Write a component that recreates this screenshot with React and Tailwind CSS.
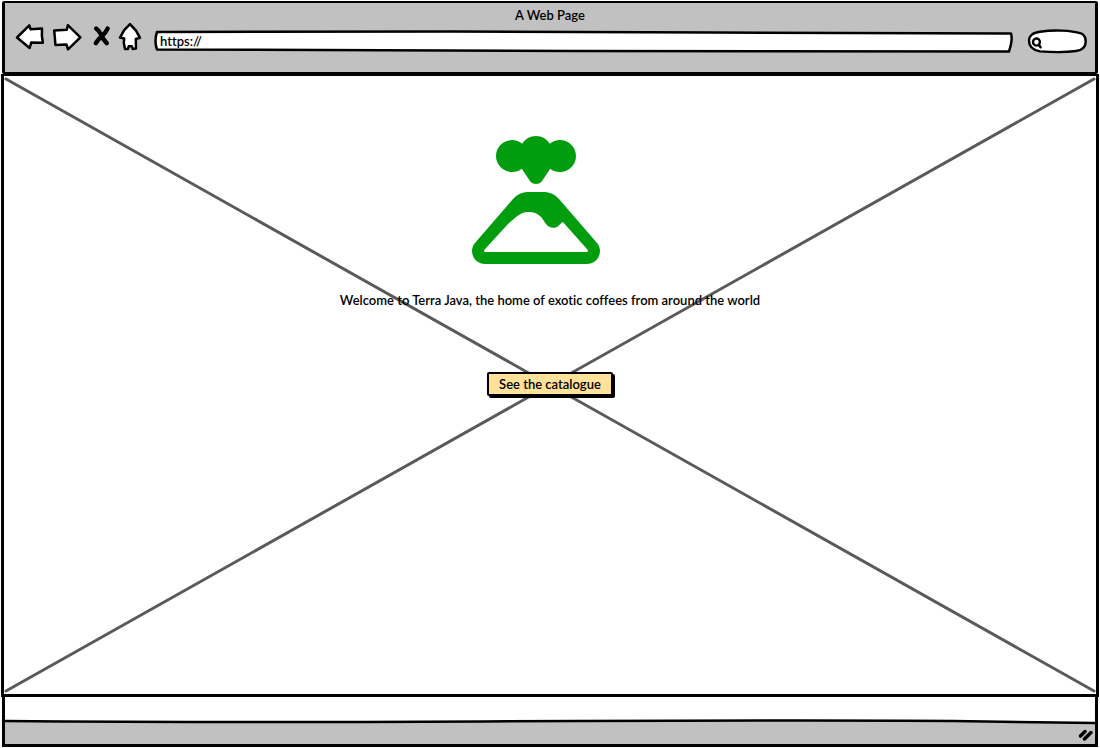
import React from "react";

function ToolButton({ label, viewBox, className, children }) {
  return (
    <button type="button" aria-label={label} className="shrink-0 cursor-pointer">
      <svg
        viewBox={viewBox}
        className={`block h-8 overflow-visible ${className}`}
        fill="white"
        stroke="black"
        strokeWidth="2.5"
        strokeLinejoin="round"
        strokeLinecap="round"
        aria-hidden="true"
      >
        {children}
      </svg>
    </button>
  );
}

function BrowserBar() {
  return (
    <header className="mx-px h-[73px] rounded-xs border-x-[3px] border-y-2 border-black bg-[#c1c1c1]">
      <h1 className="pt-0.5 text-center text-[13px] leading-5">A Web Page</h1>
      <div className="flex items-center gap-3 pr-2 pl-2.5">
        <nav aria-label="Browser controls" className="flex gap-2">
          <ToolButton label="Back" viewBox="15 25 29 32" className="w-[29px]">
            <path d="M17 37.5L29.3 25.4L30.5 29.2L42 28.6L41.9 36L42.9 42.8L31.3 42.4L29.6 48Z" />
          </ToolButton>
          <ToolButton label="Forward" viewBox="52 25 30 32" className="w-[30px]">
            <path d="M54.2 30.4L66.8 29.8L67.8 25.2L80.4 37.4L68 49.4L66.5 44.6L55.4 44.9L54.8 37Z" />
          </ToolButton>
          <ToolButton label="Stop" viewBox="90 25 20 32" className="w-5">
            <path d="M96.2 28.6Q99.4 31 101.4 35.4Q103.6 39.8 106.8 43.2M107.6 28.6Q105.6 33 101.8 36.2Q98 39.4 95.8 43.2" fill="none" strokeWidth="4.4" />
          </ToolButton>
          <ToolButton label="Home" viewBox="118 25 24 32" className="w-6">
            <path d="M130 24.2L124.2 30.2L120 37.6L124.2 38.4L123.8 43L125 49L128 48.9L128.8 46.2L131.8 46.2L132.6 49L136 48.4L135.8 39L140 37.8L136 30.6Z" />
          </ToolButton>
        </nav>
        <div className="relative h-6 min-w-0 flex-1">
          <svg
            viewBox="0 0 859 24"
            preserveAspectRatio="none"
            className="absolute inset-0 h-full w-full"
            fill="white"
            stroke="black"
            strokeWidth="2.5"
            strokeLinejoin="round"
            aria-hidden="true"
          >
            <path d="M3 3L300 2.6L560 3.6L857 4.6Q859 10 855 22.5L420 22L3 20.5Q0 12 3 3Z" vectorEffect="non-scaling-stroke" />
          </svg>
          <input
            type="text"
            aria-label="Address"
            defaultValue="https://"
            className="relative block h-6 w-full bg-transparent px-1.5 text-[13px] leading-6 outline-none"
          />
        </div>
        <div className="relative ml-0.5 h-6 w-[60px]">
          <svg
            viewBox="0 0 60 24"
            className="absolute inset-0 h-full w-full overflow-visible"
            fill="white"
            stroke="black"
            strokeWidth="2.4"
            strokeLinecap="round"
            aria-hidden="true"
          >
            <path d="M2 12C2 6 6 4 13 2.8C27 .6 44 1.4 54 4.4C58 6 58.8 9 58.7 13C58.6 18 56 21 49 22C37 23.8 24 23.2 13 22.4C6 21 2 18 2 12Z" />
            <path d="M6 12.5C6.4 9.4 10 8.6 12 10.5C14 12.6 12.5 16.5 9.8 16.6C7 16.4 5.8 14.6 6 12.5ZM12 16L13.6 18.2" />
          </svg>
          <input
            type="search"
            aria-label="Search"
            className="relative block h-6 w-full bg-transparent pr-2 pl-5 text-[13px] outline-none"
          />
        </div>
      </div>
    </header>
  );
}

function VolcanoLogo() {
  return (
    <svg viewBox="0 0 128 128" className="mr-7 block size-32" fill="#029d0e" role="img" aria-label="Terra Java">
      <path d="M40 36C31.2 36 24 28.8 24 20S31.2 4 40 4C43.9 4 47.5 5.4 50.3 7.7C53.1 3.1 58.2 0 64 0S74.9 3.1 77.7 7.7C80.5 5.4 84.1 4 88 4C96.8 4 104 11.2 104 20S96.8 36 88 36C84.3 36 80.9 34.8 78.2 32.7L70.2 44.7C68.8 46.8 66.5 48 64 48S59.2 46.8 57.8 44.7L49.8 32.7C47.1 34.8 43.7 36 40 36Z" />
      <path
        fillRule="evenodd"
        d="M56.5 56H71.5C77.5 56 83 58.5 87 63L124.8 106.8C126.8 109 128 112 128 115C128 122.2 122.2 128 115 128H13C5.8 128 0 122.2 0 115C0 112 1.2 109 3.2 106.8L41 63C45 58.5 50.5 56 56.5 56ZM12.4 113.8Q11.6 116 13 116H115Q116.4 116 115.6 113.8L90.7 85.7L87 89.2C83.5 93 77.5 92.6 74 88L69.5 81.5C66 77.8 62 76 56.5 76C52 76 48.5 77.5 45 80.3L36.5 87.5Z"
      />
    </svg>
  );
}

function Crossing() {
  return (
    <svg
      viewBox="0 0 1092 618"
      preserveAspectRatio="none"
      className="absolute inset-0 h-full w-full"
      stroke="#5a5a5a"
      strokeWidth="3"
      strokeLinecap="round"
      aria-hidden="true"
    >
      <path d="M2 3L1090 615M1090 3L2 615" vectorEffect="non-scaling-stroke" />
    </svg>
  );
}

export default function App() {
  return (
    <div className="flex min-h-screen flex-col overflow-hidden bg-white px-px pt-px pb-px font-['Lato',sans-serif] font-semibold text-black [font-variant-ligatures:none]">
      <BrowserBar />
      <main className="relative flex flex-1 flex-col items-center border-[3px] border-t-2 border-black pt-[60px] pb-16">
        <Crossing />
        <div className="relative flex flex-col items-center">
          <VolcanoLogo />
          <p className="mt-[26px] text-[13px] leading-5">
            Welcome to Terra Java, the home of exotic coffees from around the world
          </p>
          <button
            type="button"
            className="mt-[62px] cursor-pointer rounded-xs border-2 border-black bg-[#ffe29a] px-2.5 text-[13px] leading-5 shadow-[2px_2px_0_0_#000]"
          >
            See the catalogue
          </button>
        </div>
      </main>
      <footer className="mx-px">
        <div className="h-6 border-x-[3px] border-black" />
        <div className="relative h-[26px] border-x-[3px] border-b-[3px] border-black bg-[#c1c1c1]">
          <svg
            viewBox="0 0 1092 6"
            preserveAspectRatio="none"
            className="absolute inset-x-0 top-0 block h-1.5 w-full overflow-visible"
            aria-hidden="true"
          >
            <path d="M0 0H960L1092 2V-1H0Z" fill="white" />
            <path
              d="M0 0Q200 1.8 480 .4Q800 -1 950 0L1092 2"
              fill="none"
              stroke="black"
              strokeWidth="2.5"
              vectorEffect="non-scaling-stroke"
            />
          </svg>
          <svg
            viewBox="0 0 18 14"
            className="absolute right-0.5 bottom-0.5 h-3.5 w-[18px]"
            stroke="black"
            strokeWidth="3.4"
            strokeLinecap="round"
            aria-hidden="true"
          >
            <path d="M5.5 8L10 3.5M9.5 11L16 4.5" />
          </svg>
        </div>
      </footer>
    </div>
  );
}
